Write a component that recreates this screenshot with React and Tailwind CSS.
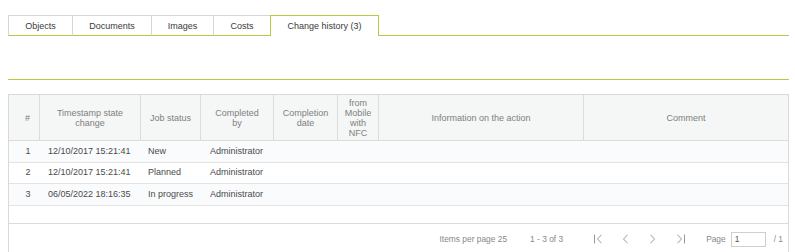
const GREEN = 'bg-[#b7ca45]'

const tabs = [
  { label: 'Objects', w: 'w-[64px]' },
  { label: 'Documents', w: 'w-[79px]' },
  { label: 'Images', w: 'w-[62px]' },
  { label: 'Costs', w: 'w-[57px]' },
]

const rows = [
  { n: 1, ts: '12/10/2017 15:21:41', status: 'New', by: 'Administrator' },
  { n: 2, ts: '12/10/2017 15:21:41', status: 'Planned', by: 'Administrator' },
  { n: 3, ts: '06/05/2022 18:16:35', status: 'In progress', by: 'Administrator' },
]

const cols = 'grid grid-cols-[31px_101px_60px_73px_64px_41px_205px_1fr]'

function Chevron({ dir, bar }) {
  const left = dir === 'left'
  return (
    <svg width="11" height="10" viewBox="0 0 11 10" fill="none" stroke="#9a9a9a" strokeWidth="1">
      {left ? <path d="M7.5 0.8 L3.5 5 L7.5 9.2" /> : <path d="M3.5 0.8 L7.5 5 L3.5 9.2" />}
      {bar && (left ? <path d="M0.5 0.5 V9.5" /> : <path d="M10.5 0.5 V9.5" />)}
    </svg>
  )
}

function HeadCell({ children, last, className = '' }) {
  return (
    <div
      className={`flex items-center justify-center text-center leading-[10px] text-[#808080] ${
        last ? '' : 'border-r border-[#dcdcdc]'
      } ${className}`}
    >
      {children}
    </div>
  )
}

export default function App() {
  return (
    <div className="min-h-screen bg-white pt-[15px] pl-[8px] pr-[6px] font-['Liberation_Sans',Arial,sans-serif] text-[9px]">
      {/* Tabs */}
      <div className="relative flex items-end">
        {tabs.map((t) => (
          <div
            key={t.label}
            className={`${t.w} h-[21px] flex items-center justify-center border-t border-l border-[#d6d6d6] text-[#3a3a3a] border-b border-b-[#b7ca45] pt-[2px]`}
          >
            {t.label}
          </div>
        ))}
        <div className="w-[109px] h-[21px] flex items-center justify-center border-t border-l border-r border-[#b7ca45] bg-white text-[#3a3a3a] pt-[2px]">
          Change history (3)
        </div>
        <div className={`flex-1 h-px ${GREEN}`} />
      </div>

      <div className={`mt-[43px] h-px w-[781px] ${GREEN}`} />

      {/* Grid */}
      <div className="mt-[14px] w-[781px] border border-[#d9d9d9] text-[9px]">
        <div className={`${cols} h-[46px] bg-[#f5f6f6] border-b border-[#dcdcdc]`}>
          <HeadCell className="pl-[7px]">#</HeadCell>
          <HeadCell>
            Timestamp state
            <br />
            change
          </HeadCell>
          <HeadCell>Job status</HeadCell>
          <HeadCell>
            Completed
            <br />
            by
          </HeadCell>
          <HeadCell>
            Completion
            <br />
            date
          </HeadCell>
          <HeadCell>
            from
            <br />
            Mobile
            <br />
            with
            <br />
            NFC
          </HeadCell>
          <HeadCell>Information on the action</HeadCell>
          <HeadCell last>Comment</HeadCell>
        </div>

        {rows.map((r, i) => (
          <div
            key={r.n}
            className={`${cols} ${i === 1 ? 'h-[21px] bg-white' : 'h-[22px] bg-[#fafbfd]'} border-b border-[#e3e3e3] text-[#4a4a4a] items-center`}
          >
            <div className="text-center pl-[7px]">{r.n}</div>
            <div className="pl-[8px]">{r.ts}</div>
            <div className="pl-[7px]">{r.status}</div>
            <div className="pl-[9px]">{r.by}</div>
            <div />
            <div />
            <div />
            <div />
          </div>
        ))}

        <div className="h-[18px] border-b border-[#dcdcdc]" />

        {/* Pager */}
        <div className="h-[30px] flex items-center justify-end pr-[5px] text-[8.4px] text-[#888]">
          <span>Items per page 25</span>
          <span className="ml-[23px]">1 - 3 of 3</span>
          <span className="ml-[31px] flex items-center">
            <Chevron dir="left" bar />
          </span>
          <span className="ml-[15px] flex items-center">
            <Chevron dir="left" />
          </span>
          <span className="ml-[16px] flex items-center">
            <Chevron dir="right" />
          </span>
          <span className="ml-[16px] flex items-center">
            <Chevron dir="right" bar />
          </span>
          <span className="ml-[21px]">Page</span>
          <div className="ml-[5px] w-[35px] h-[15px] border border-[#cfcfcf] pl-[3px] leading-[13px] text-[#555]">
            1
          </div>
          <span className="ml-[8px]">/ 1</span>
        </div>
      </div>
    </div>
  )
}
